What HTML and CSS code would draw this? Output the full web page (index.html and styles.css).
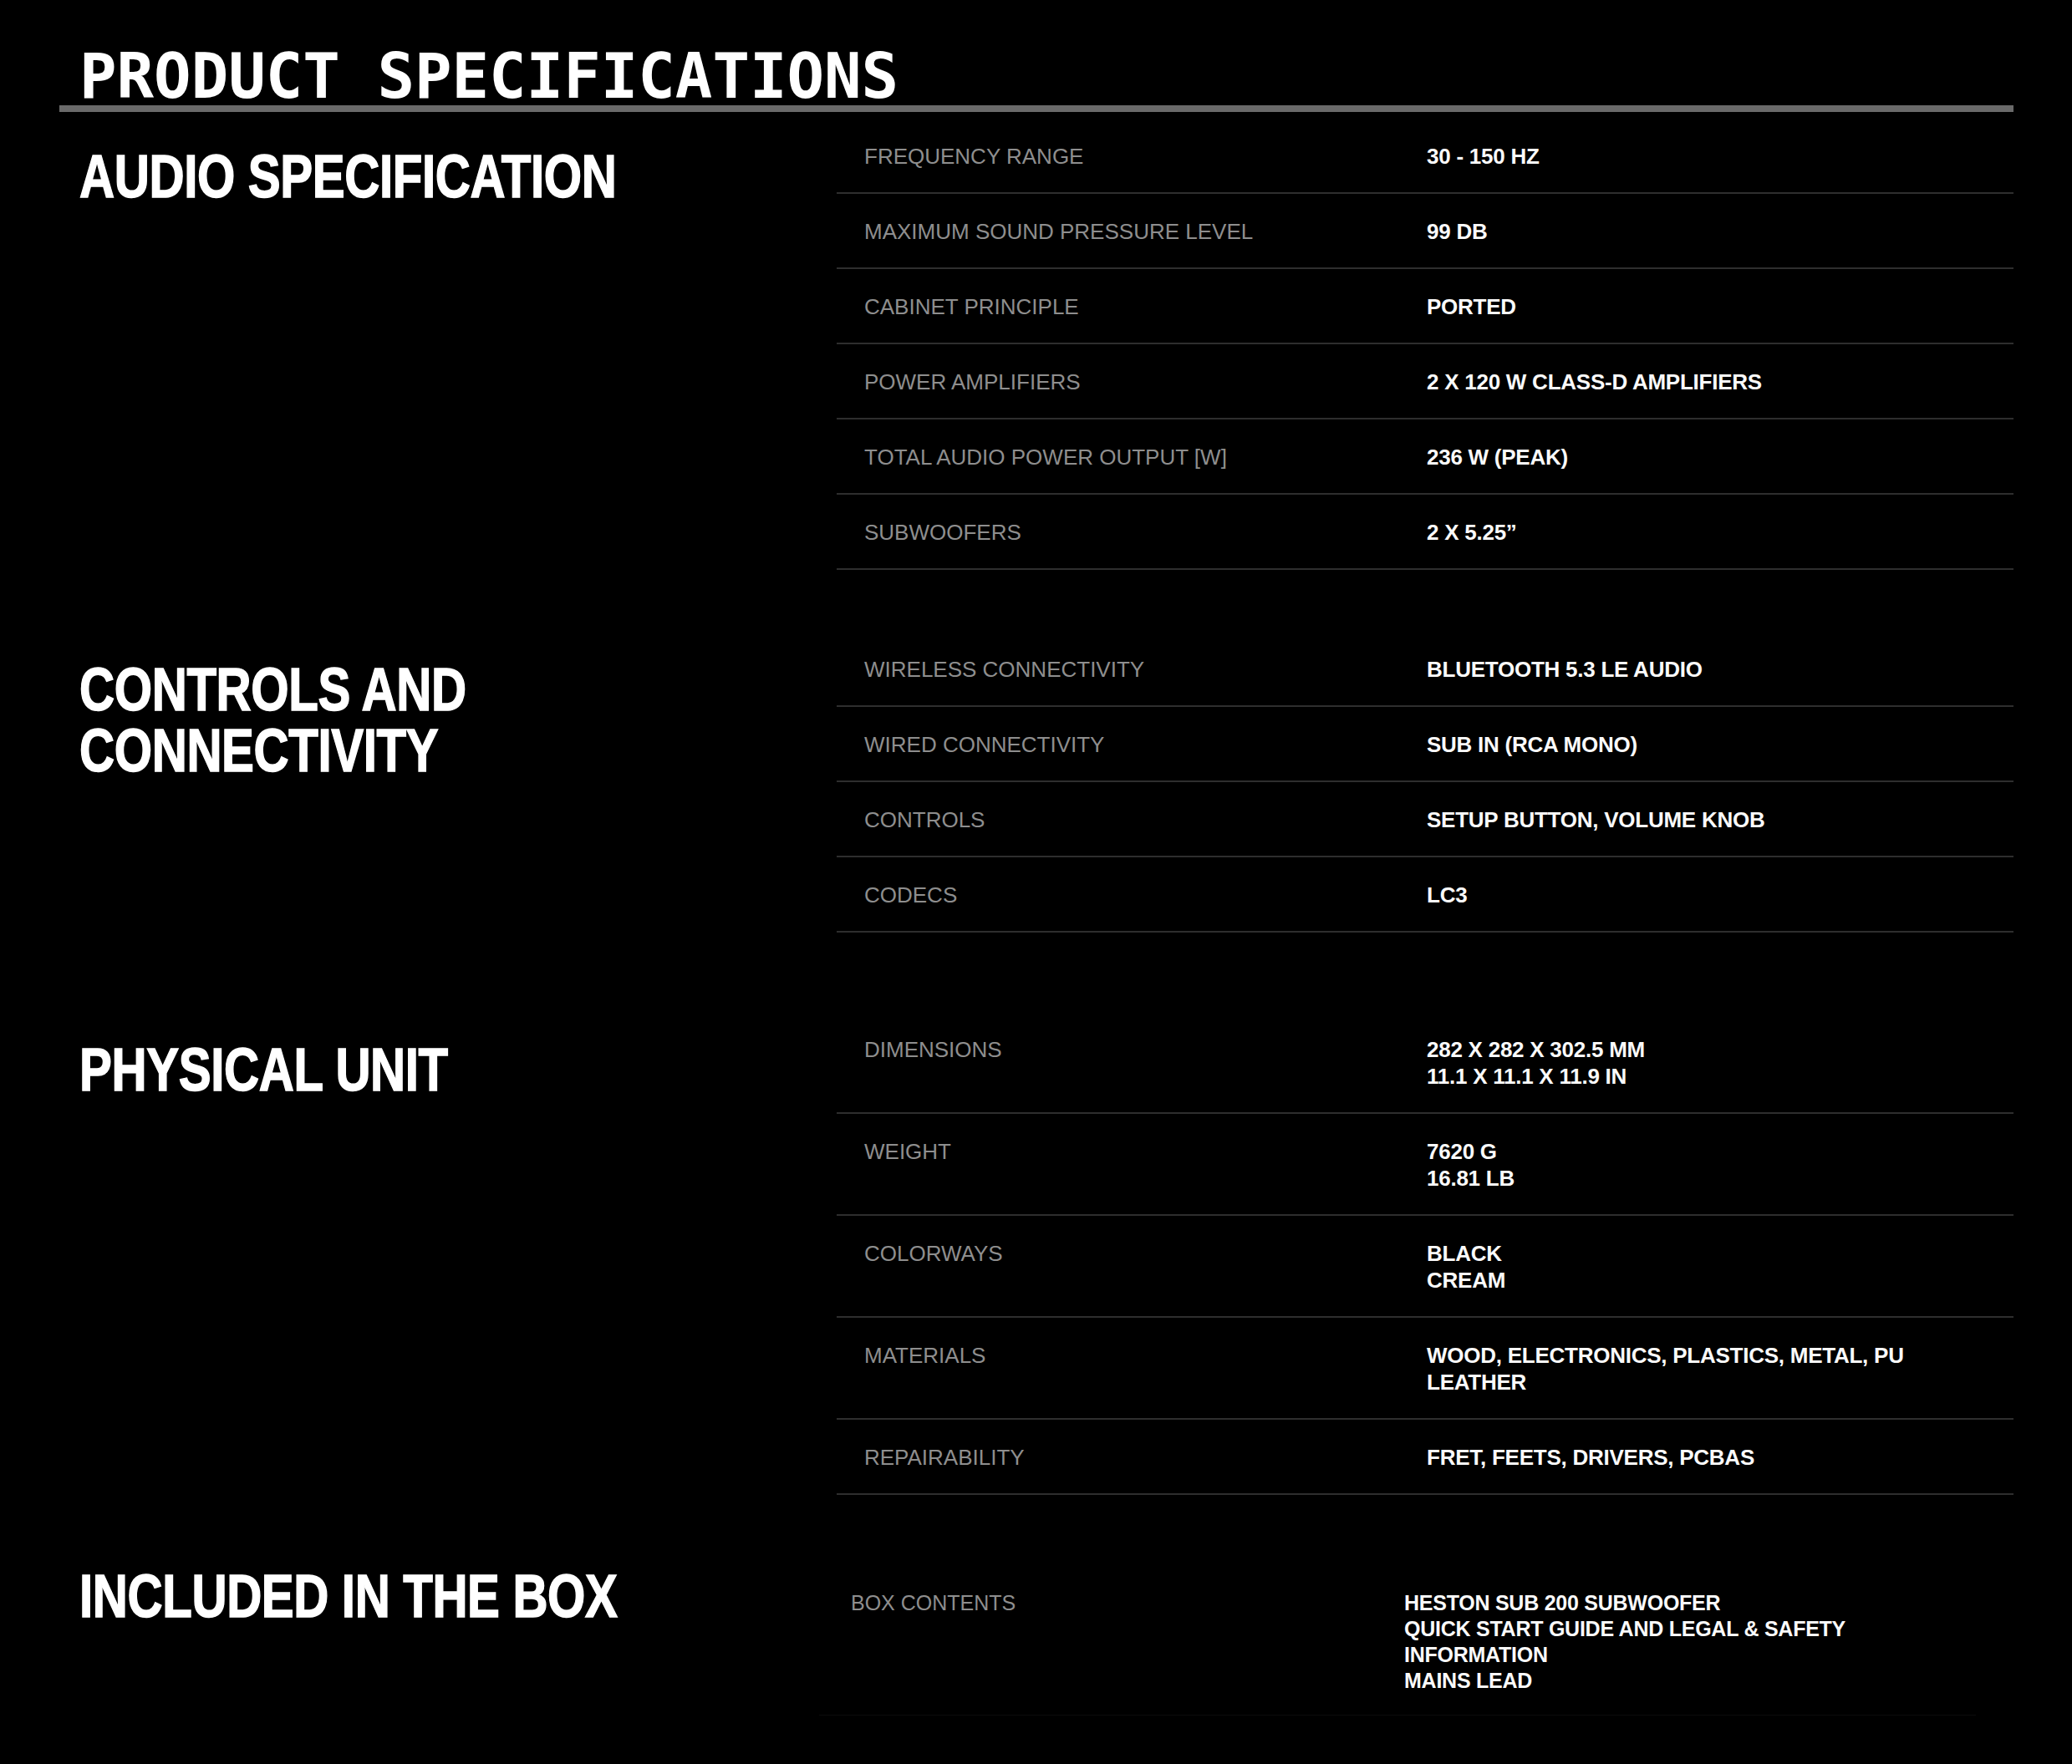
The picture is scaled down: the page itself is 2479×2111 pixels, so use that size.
FILE: index.html
```html
<!DOCTYPE html>
<html lang="en">
<head>
<meta charset="utf-8">
<title>Product Specifications</title>
<link rel="stylesheet" href="styles.css">
</head>
<body>
<div class="page">
  <header class="title-bar">
    <h1 class="title">PRODUCT SPECIFICATIONS</h1>
  </header>

  <section class="spec-section s-audio">
    <h2 class="sec-heading">AUDIO SPECIFICATION</h2>
    <div class="rows">
      <div class="row"><div class="label">FREQUENCY RANGE</div><div class="value">30 - 150 HZ</div></div>
      <div class="row"><div class="label">MAXIMUM SOUND PRESSURE LEVEL</div><div class="value">99 DB</div></div>
      <div class="row"><div class="label">CABINET PRINCIPLE</div><div class="value">PORTED</div></div>
      <div class="row"><div class="label">POWER AMPLIFIERS</div><div class="value">2 X 120 W CLASS-D AMPLIFIERS</div></div>
      <div class="row"><div class="label">TOTAL AUDIO POWER OUTPUT [W]</div><div class="value">236 W (PEAK)</div></div>
      <div class="row"><div class="label">SUBWOOFERS</div><div class="value">2 X 5.25”</div></div>
    </div>
  </section>

  <section class="spec-section s-controls">
    <h2 class="sec-heading">CONTROLS AND<br>CONNECTIVITY</h2>
    <div class="rows">
      <div class="row"><div class="label">WIRELESS CONNECTIVITY</div><div class="value">BLUETOOTH 5.3 LE AUDIO</div></div>
      <div class="row"><div class="label">WIRED CONNECTIVITY</div><div class="value">SUB IN (RCA MONO)</div></div>
      <div class="row"><div class="label">CONTROLS</div><div class="value">SETUP BUTTON, VOLUME KNOB</div></div>
      <div class="row"><div class="label">CODECS</div><div class="value">LC3</div></div>
    </div>
  </section>

  <section class="spec-section s-physical">
    <h2 class="sec-heading">PHYSICAL UNIT</h2>
    <div class="rows">
      <div class="row"><div class="label">DIMENSIONS</div><div class="value">282 X 282 X 302.5 MM<br>11.1 X 11.1 X 11.9 IN</div></div>
      <div class="row"><div class="label">WEIGHT</div><div class="value">7620 G<br>16.81 LB</div></div>
      <div class="row"><div class="label">COLORWAYS</div><div class="value">BLACK<br>CREAM</div></div>
      <div class="row"><div class="label">MATERIALS</div><div class="value">WOOD, ELECTRONICS, PLASTICS, METAL, PU LEATHER</div></div>
      <div class="row"><div class="label">REPAIRABILITY</div><div class="value">FRET, FEETS, DRIVERS, PCBAS</div></div>
    </div>
  </section>

  <section class="spec-section s-box">
    <h2 class="sec-heading">INCLUDED IN THE BOX</h2>
    <div class="rows">
      <div class="row"><div class="label">BOX CONTENTS</div><div class="value">HESTON SUB 200 SUBWOOFER<br>QUICK START GUIDE AND LEGAL &amp; SAFETY INFORMATION<br>MAINS LEAD</div></div>
    </div>
  </section>
</div>
</body>
</html>
```
FILE: styles.css
```css
html, body {
  margin: 0;
  background: #000;
}

body {
  font-family: "Liberation Sans", Arial, Helvetica, sans-serif;
  color: #fff;
}

.page {
  padding: 0 70px 0 71px;
}

.title-bar {
  padding-top: 57px;
  border-bottom: 8px solid #6a6a6a;
}

.title {
  margin: 0;
  padding-left: 24px;
  font-family: "DejaVu Sans Mono", "Liberation Mono", monospace;
  font-weight: 700;
  font-size: 74px;
  line-height: 69px;
  color: #fff;
}

.spec-section {
  display: grid;
  grid-template-columns: 930px 1fr;
  align-items: start;
}

.s-audio { margin-top: 8px; }
.s-controls { margin-top: 74px; }
.s-physical { margin-top: 95px; }
.s-box { margin-top: 85px; }

.sec-heading {
  margin: 33px 0 0 24px;
  font-family: "Liberation Sans", Arial, sans-serif;
  font-weight: 700;
  font-size: 72px;
  line-height: 73px;
  color: #fff;
  letter-spacing: -0.5px;
  transform: scaleX(0.81);
  transform-origin: left top;
  -webkit-text-stroke: 1.5px #fff;
  white-space: nowrap;
}

.row {
  display: grid;
  grid-template-columns: 706px 1fr;
  padding: 29px 0 27px;
  border-bottom: 2px solid #2e2e2e;
  font-size: 26px;
  line-height: 32px;
}

.label {
  padding-left: 33px;
  color: #8e8e8e;
}

.value {
  color: #fafafa;
  font-weight: 700;
  letter-spacing: -0.25px;
  padding-right: 20px;
}

.s-box .sec-heading {
  margin-top: 0;
}

.s-box .rows {
  margin-left: -21px;
  margin-right: 45px;
}

.s-box .row {
  grid-template-columns: 700px 1fr;
  padding-bottom: 25px;
  border-bottom: 1px solid #0b0b0b;
  font-size: 25px;
  line-height: 31px;
}

.s-box .label {
  padding-left: 38px;
}
```
